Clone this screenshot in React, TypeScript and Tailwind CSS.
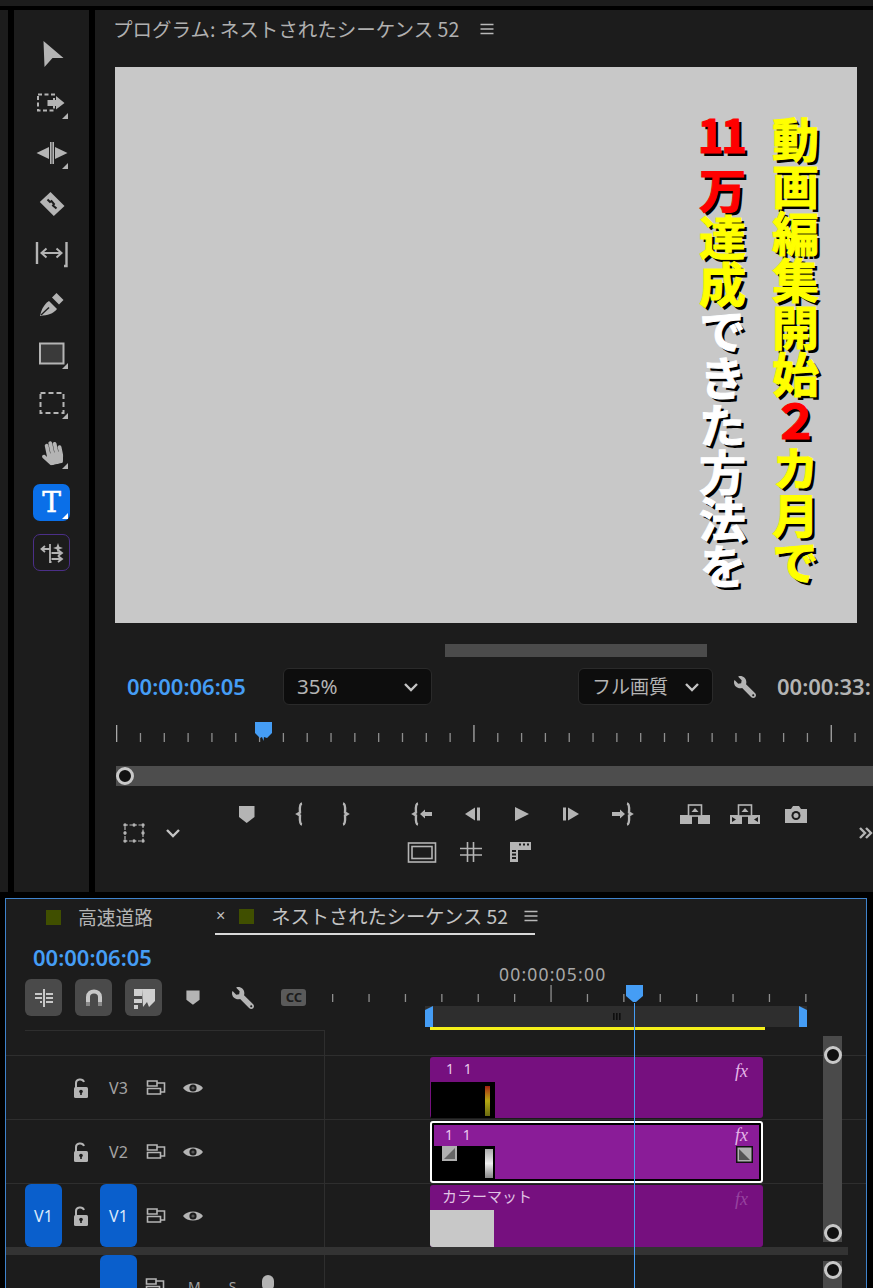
import React from "react";
import { FaHandPaper, FaWrench } from "react-icons/fa";

const g = "#b4b4b4";
const CJK = "font-['Noto_Sans_CJK_JP','Noto_Sans',sans-serif]";
const TIME = "font-['Noto_Sans','Liberation_Sans',sans-serif]";

const Ic: React.FC<{ w?: number; h?: number; children: React.ReactNode; className?: string }> = ({ w = 24, h = 24, children, className }) => (
  <svg width={w} height={h} viewBox={`0 0 ${w} ${h}`} className={`shrink-0 ${className ?? ""}`} fill="none">
    {children}
  </svg>
);

const Corner = () => <path d="M36 30V36H30Z" fill={g} />;

const tools: React.ReactNode[] = [
  <path key="a" d="M11.5 8L31.5 25H20.5L12.5 34Z" fill={g} />,
  <g key="b">
    <rect x="6" y="11.5" width="16" height="16" stroke={g} strokeWidth="2" strokeDasharray="4 2.5" />
    <path d="M15.5 17H24V13L32.5 20L24 26.5V23H15.5Z" fill={g} />
    <Corner />
  </g>,
  <g key="c">
    <path d="M4.5 20L17 14V26Z M35.5 20L23 14V26Z" fill={g} />
    <rect x="18" y="9" width="1.6" height="22" fill={g} />
    <rect x="20.4" y="9" width="1.6" height="22" fill={g} />
    <Corner />
  </g>,
  <g key="d">
    <path d="M7.8 19L18.5 9L32.5 23L21.8 33Z" fill={g} />
    <path d="M15.5 16.5L18 19L19.5 18L22 21L21 22.5L24.5 25.5" stroke="#1c1c1c" strokeWidth="2" />
  </g>,
  <g key="e">
    <path d="M5 9V31M34.5 9V33H32" stroke={g} strokeWidth="2.4" />
    <path d="M10 20H29M14.5 15.5L9.5 20L14.5 24.5M24.5 15.5L29.5 20L24.5 24.5" stroke={g} strokeWidth="2" />
  </g>,
  <g key="f">
    <path d="M8 33C9.5 26 12 21.5 17 18L25 26C21 31 16 32 8 33Z" fill={g} />
    <path d="M20 14.5L24.5 10L31.5 17L27 21.5Z" fill={g} />
    <path d="M9 32L17 24.5" stroke="#1c1c1c" strokeWidth="1.4" />
  </g>,
  <g key="g">
    <rect x="8" y="10.5" width="23.5" height="20" fill="#3a3a3a" stroke={g} strokeWidth="2" />
    <Corner />
  </g>,
  <g key="h">
    <rect x="8.5" y="10" width="23" height="20" stroke={g} strokeWidth="2" strokeDasharray="5 3" />
    <Corner />
  </g>,
];

const ToolRail: React.FC = () => (
  <div className="flex w-[75px] shrink-0 flex-col items-center gap-[10px] bg-[#1c1c1c] pt-[23px]">
    {tools.map((t, i) => (
      <Ic key={i} w={40} h={40}>
        {t}
      </Ic>
    ))}
    <div className="relative flex h-[40px] w-[40px] items-center justify-center">
      <FaHandPaper size={24} color={g} className="-rotate-12" />
      <svg width="40" height="40" className="absolute left-0 top-0" fill="none">
        <Corner />
      </svg>
    </div>
    <div className="relative mt-[1px] flex h-[37px] w-[37px] items-center justify-center rounded-[7px] bg-[#0a6fe8] font-['DejaVu_Serif',serif] text-[28px] font-normal leading-none text-white [-webkit-text-stroke:0.5px_#fff]">
      T
      <span className="absolute bottom-[2px] right-[2px] h-0 w-0 border-b-[6px] border-l-[6px] border-b-white border-l-transparent" />
    </div>
    <div className="mt-[3px] flex h-[37px] w-[37px] items-center justify-center rounded-[7px] border border-[#4b2f88]">
      <Ic w={30} h={30}>
        <path d="M13 6V24H14.5M13 11H5M8 8L4.5 11L8 14M14.5 15H24M21 12L25 15L21 18M14.5 21H24M21 18L25 21L21 24" stroke={g} strokeWidth="1.8" />
        <path d="M21 5L22.3 8.7L26 10L22.3 11.3L21 15L19.7 11.3L16 10L19.7 8.7Z" fill={g} />
      </Ic>
    </div>
  </div>
);

const Chevron: React.FC<{ className?: string }> = ({ className }) => (
  <Ic w={16} h={10} className={className}>
    <path d="M2 2L8 8L14 2" stroke="#c4c4c4" strokeWidth="2.4" />
  </Ic>
);

const Burger: React.FC<{ className?: string }> = ({ className }) => (
  <Ic w={14} h={12} className={className}>
    <path d="M0.5 1.5H13.5M0.5 6H13.5M0.5 10.5H13.5" stroke="#b8b8b8" strokeWidth="1.4" />
  </Ic>
);

const Wrench: React.FC = () => (
  <div className="flex h-[24px] w-[24px] shrink-0 items-center justify-center">
    <FaWrench size={22} color={g} className="-scale-x-100" />
  </div>
);

const Marker: React.FC<{ scale?: number }> = ({ scale = 1 }) => (
  <svg width={24 * scale} height={24 * scale} viewBox="0 0 24 24" className="shrink-0">
    <path d="M4 4H19.5V15L11.7 21L4 15Z" fill={g} />
  </svg>
);

const Brace: React.FC<{ dir: "l" | "r" }> = ({ dir }) => (
  <Ic>
    <path
      d={dir === "l" ? "M14 1.5C11 2 12 9 12 10.5L9.5 12L12 13.5C12 15 11 22 14 22.5" : "M10 1.5C13 2 12 9 12 10.5L14.5 12L12 13.5C12 15 13 22 10 22.5"}
      stroke={g}
      strokeWidth="2.4"
    />
  </Ic>
);

const ProgramRuler = () => {
  const ticks = Array.from({ length: 32 }, (_, i) => i);
  return (
    <svg width="778" height="22" className="mt-[17px] block shrink-0">
      {ticks.map((i) => {
        const x = 21 + i * 23.82;
        const major = i % 15 === 0;
        return <rect key={i} x={x} y={major ? 3 : 11} width="1.3" height={major ? 17 : 9} fill={major ? "#a8a8a8" : "#8e8e8e"} />;
      })}
      <path d="M160 0H177V11L172 16L169 15L168.5 19L167 15L165 16L160 11Z" fill="#459df5" />
    </svg>
  );
};

const TransportRow = () => (
  <div className="flex items-center">
    <div className="ml-[1px]">
      <Marker />
    </div>
    <div className="ml-[29px]"><Brace dir="l" /></div>
    <div className="ml-[21px]"><Brace dir="r" /></div>
    <Ic className="ml-[52px]" w={26}>
      <path d="M9 1.5C6 2 7 9 7 10.5L4.5 12L7 13.5C7 15 6 22 9 22.5" stroke={g} strokeWidth="2.4" />
      <path d="M11 12L16 7.5V10H23V14H16V16.5Z" fill={g} />
    </Ic>
    <Ic className="ml-[26px]">
      <path d="M4 12L14 5.5V18.5Z" fill={g} />
      <rect x="16" y="5.5" width="3" height="13" fill={g} />
    </Ic>
    <Ic className="ml-[24px]">
      <path d="M6 5L20 12L6 19Z" fill={g} />
    </Ic>
    <Ic className="ml-[26px]">
      <rect x="4" y="5.5" width="3" height="13" fill={g} />
      <path d="M20 12L9 5.5V18.5Z" fill={g} />
    </Ic>
    <Ic className="ml-[27px]" w={26}>
      <path d="M2 10H10V7.5L15 12L10 16.5V14H2Z" fill={g} />
      <path d="M17 1.5C20 2 19 9 19 10.5L21.5 12L19 13.5C19 15 20 22 17 22.5" stroke={g} strokeWidth="2.4" />
    </Ic>
    <Ic className="ml-[43px]" w={32}>
      <rect x="1" y="13" width="12" height="9" fill={g} />
      <rect x="19" y="13" width="12" height="9" fill={g} />
      <rect x="9.5" y="3" width="13" height="11" fill="#1c1c1c" stroke={g} strokeWidth="1.6" />
      <path d="M16 6L19.5 10H12.5Z" fill={g} />
    </Ic>
    <Ic className="ml-[18px]" w={32}>
      <rect x="1" y="13" width="12" height="9" fill={g} />
      <rect x="19" y="13" width="12" height="9" fill={g} />
      <path d="M3 15V20L7 17.5Z M29 15V20L25 17.5Z" fill="#1c1c1c" />
      <rect x="9.5" y="3" width="13" height="11" fill="#1c1c1c" stroke={g} strokeWidth="1.6" />
      <path d="M16 6L19.5 10H12.5Z" fill={g} />
    </Ic>
    <Ic className="ml-[23px]">
      <path d="M1 7H7L9 4H15L17 7H23V21H1Z" fill={g} />
      <circle cx="12" cy="13.5" r="4.5" fill="#1c1c1c" />
      <circle cx="12" cy="13.5" r="2.5" fill={g} />
    </Ic>
  </div>
);

const ProgramPanel: React.FC = () => (
  <div className="flex min-w-0 flex-1 flex-col overflow-hidden bg-[#1c1c1c]">
    <div className={`flex h-[57px] shrink-0 items-center pb-[20px] pl-[18px] ${CJK} text-[19.5px] text-[#b0b0b0]`}>
      <span className="whitespace-nowrap">プログラム: ネストされたシーケンス 52</span>
      <Burger className="ml-[21px]" />
    </div>
    <div className="ml-[20px] flex h-[556px] w-[742px] shrink-0 flex-row-reverse gap-[21px] bg-[#c8c8c8] pr-[36px] pt-[49px]">
      <div className={`${CJK} font-bold text-[47px] leading-[52px] text-[#ffff00] [writing-mode:vertical-rl] [text-shadow:3px_3px_0_#000] [-webkit-text-stroke:1px_currentColor]`}>
        動画編集開始<span className="text-[#ff0000]">２</span>カ月で
      </div>
      <div className={`${CJK} -mt-[7px] font-bold text-[47px] leading-[52px] text-white [writing-mode:vertical-rl] [text-shadow:3px_3px_0_#000] [-webkit-text-stroke:1px_currentColor]`}>
        <span className="text-[#ff0000]">
          <span className="[text-combine-upright:all]">11</span>
          <span className="ms-[11px]">万</span>
        </span>
        <span className="text-[#ffff00]">達成</span>できた方法を
      </div>
    </div>
    <div className="ml-[350px] mt-[21px] h-[13px] w-[262px] shrink-0 bg-[#4b4b4b]" />
    <div className="mt-[11px] flex h-[37px] shrink-0 items-center pl-[32px]">
      <span className={`w-[156px] shrink-0 ${TIME} text-[22px] font-semibold text-[#459df5]`}>00:00:06:05</span>
      <div className="flex h-[37px] w-[149px] shrink-0 items-center justify-between rounded-[6px] border border-[#2a2a2a] bg-[#0d0d0d] pl-[13px] pr-[12px]">
        <span className={`${TIME} text-[20.5px] text-[#b4b4b4]`}>35%</span>
        <Chevron />
      </div>
      <div className="ml-[146px] flex h-[37px] w-[135px] shrink-0 items-center justify-between rounded-[6px] border border-[#2a2a2a] bg-[#0d0d0d] pl-[13px] pr-[12px]">
        <span className={`${CJK} whitespace-nowrap text-[19px] text-[#b4b4b4]`}>フル画質</span>
        <Chevron />
      </div>
      <div className="ml-[20px]"><Wrench /></div>
      <span className={`ml-[20px] whitespace-nowrap ${TIME} text-[22px] font-semibold text-[#b4b4b4]`}>00:00:33:</span>
    </div>
    <ProgramRuler />
    <div className="ml-[21px] mt-[22px] flex h-[20px] w-[800px] shrink-0 items-center bg-[#4d4d4d]">
      <div className="h-[18px] w-[18px] rounded-full border-[3px] border-[#c8c8c8] bg-[#111]" />
    </div>
    <div className="mt-[16px] flex shrink-0 items-center">
      <div className="ml-[27px] flex w-[112px] shrink-0 items-center gap-[19px]">
        <Ic>
          <rect x="3" y="4" width="18" height="16" stroke={g} strokeWidth="1.2" strokeDasharray="3 1.5" />
          <path d="M3 4h.01M12 4h.01M21 4h.01M3 12h.01M21 12h.01M3 20h.01M12 20h.01M21 20h.01" stroke={g} strokeWidth="3.4" strokeLinecap="round" />
        </Ic>
        <Chevron />
      </div>
      <div className="flex flex-col">
        <TransportRow />
        <div className="ml-[173px] mt-[14px] flex items-center">
          <Ic w={30}>
            <rect x="1.5" y="3" width="27" height="19" stroke={g} strokeWidth="1.6" />
            <rect x="5" y="6.5" width="20" height="12" stroke={g} strokeWidth="1.6" />
          </Ic>
          <Ic className="ml-[22px]">
            <path d="M1 8.5H23M1 15H23M8.5 2V22M14.5 2V22" stroke={g} strokeWidth="1.6" />
          </Ic>
          <Ic className="ml-[25px]">
            <path d="M2 2H23V10H10V22H2Z" fill={g} />
            <path d="M11 4.5H13M15 4.5H17M19 4.5H21M4 11H8M4 14.5H8M4 18H8" stroke="#1c1c1c" strokeWidth="2" />
          </Ic>
        </div>
      </div>
      <Ic w={14} h={16} className="ml-[51px]">
        <path d="M1 3L6 8L1 13M7 3L12 8L7 13" stroke={g} strokeWidth="2.4" />
      </Ic>
    </div>
  </div>
);

const TimelineButton: React.FC<{ children: React.ReactNode; className?: string }> = ({ children, className }) => (
  <div className={`flex h-[37px] w-[37px] shrink-0 items-center justify-center rounded-[6px] bg-[#4a4a4a] ${className ?? ""}`}>{children}</div>
);

const Lock = () => (
  <Ic w={18} h={22}>
    <path d="M4 11V6C4 2 10.5 1 12 5" stroke={g} strokeWidth="2" />
    <rect x="2" y="10" width="14" height="11" rx="1.5" fill={g} />
    <circle cx="9" cy="14.5" r="1.8" fill="#1c1c1c" />
    <rect x="8.2" y="15" width="1.6" height="3" fill="#1c1c1c" />
  </Ic>
);

const TrackIcon = () => (
  <Ic w={20} h={18}>
    <path d="M1.5 2H11V7H1.5ZM1.5 9.5H14.5V15H1.5ZM11 4H18.5V13H14.5" stroke={g} strokeWidth="1.6" />
  </Ic>
);

const Eye = () => (
  <Ic w={22} h={14}>
    <path d="M1 7C5 1 17 1 21 7C17 13 5 13 1 7Z" fill={g} />
    <circle cx="11" cy="7" r="3.6" fill="#1c1c1c" />
    <circle cx="11" cy="7" r="1.6" fill="#555" />
  </Ic>
);

const BlueSlot: React.FC<{ label?: string }> = ({ label }) => (
  <div className={`flex h-full w-[37px] shrink-0 items-center justify-center rounded-[6px] bg-[#0a5fcc] ${TIME} text-[16px] text-[#dbe9fb]`}>{label}</div>
);

const TrackHeader: React.FC<{ name: string; target?: boolean }> = ({ name, target }) => (
  <div className="flex h-full w-[319px] shrink-0 items-center border-r border-[#2e2e2e] pl-[19px]">
    <div className="flex h-full w-[37px] shrink-0 items-center">{target ? <BlueSlot label="V1" /> : null}</div>
    <div className="flex w-[38px] shrink-0 justify-center"><Lock /></div>
    {target ? (
      <BlueSlot label={name} />
    ) : (
      <div className={`w-[37px] shrink-0 text-center ${TIME} text-[16px] text-[#a4a4a4]`}>{name}</div>
    )}
    <div className="flex w-[37px] shrink-0 justify-center"><TrackIcon /></div>
    <div className="flex w-[38px] shrink-0 justify-center"><Eye /></div>
  </div>
);

const Fx: React.FC<{ className: string }> = ({ className }) => (
  <span className={`absolute font-['Liberation_Serif',serif] text-[18px] italic ${className}`}>fx</span>
);

const ClipA = () => (
  <div className="relative ml-[105px] mt-[1px] h-[61px] w-[333px] rounded-[3px] bg-[#76107f]">
    <span className={`absolute left-[16px] top-[1px] ${TIME} text-[14px] tracking-[3px] text-[#e9c9ec]`}>1 1</span>
    <Fx className="right-[15px] top-[1px] text-[#e4b6e8]" />
    <div className="absolute bottom-0 left-[1px] h-[36px] w-[64px] bg-black">
      <div className="absolute bottom-[2px] right-[5px] top-[4px] w-[5px] bg-gradient-to-b from-[#a01a10] via-[#b3a812] to-[#6a6a10]" />
    </div>
  </div>
);

const ClipB = () => (
  <div className="relative ml-[105px] mt-[1px] h-[62px] w-[333px] rounded-[3px] border-[2px] border-white bg-black p-[2px]">
    <div className="relative h-full bg-[#8a1c98]">
      <span className={`absolute left-[11px] -top-[1px] ${TIME} text-[14px] tracking-[3px] text-[#ecc8f0]`}>1 1</span>
      <Fx className="right-[11px] -top-[3px] text-[#e4b6e8]" />
      <div className="absolute bottom-0 left-0 h-[33px] w-[61px] bg-black">
        <div className="absolute bottom-[1px] right-[2px] top-[3px] w-[8px] bg-gradient-to-b from-[#aaa] via-[#eee] to-[#888]" />
      </div>
      <svg width="15" height="15" className="absolute bottom-[18px] left-[8px]">
        <rect width="15" height="15" fill="#b0b0b0" />
        <path d="M13 2V13H2Z" fill="#666" />
      </svg>
      <svg width="17" height="17" className="absolute bottom-[16px] right-[6px]">
        <rect width="17" height="17" fill="#111" />
        <rect x="1.5" y="1.5" width="14" height="14" fill="#b0b0b0" />
        <path d="M3 3V14H14Z" fill="#555" />
      </svg>
    </div>
  </div>
);

const ClipC = () => (
  <div className="relative ml-[105px] mt-[1px] h-[62px] w-[333px] overflow-hidden rounded-[3px] bg-[#76107f]">
    <span className={`absolute left-[12px] top-0 whitespace-nowrap ${CJK} text-[15px] text-[#e0c4e4]`}>カラーマット</span>
    <Fx className="right-[15px] top-[1px] text-[#96449f]" />
    <div className="absolute bottom-0 left-0 h-[37px] w-[64px] bg-[#c8c8c8]" />
  </div>
);

const Knob = () => <div className="h-[18px] w-[18px] rounded-full border-[3px] border-[#c8c8c8] bg-[#111]" />;

const TimelineRuler = () => {
  const ticks = Array.from({ length: 14 }, (_, i) => i);
  return (
    <svg width="541" height="21" className="block shrink-0">
      {ticks.map((i) => {
        const x = 7 + i * 36.4;
        const major = (i - 6) % 10 === 0;
        return <rect key={i} x={x} y={major ? 1 : 10} width="1.3" height={major ? 17 : 8} fill="#8e8e8e" />;
      })}
      <path d="M301 1H318V12L311 18H308L301 12Z" fill="#459df5" />
    </svg>
  );
};

const TimelinePanel: React.FC = () => (
  <div className="relative mx-[5px] mt-[6px] flex h-[390px] w-[862px] shrink-0 flex-col overflow-hidden border-x border-t border-[#3f83cc] bg-[#1c1c1c]">
    <div className="flex h-[36px] shrink-0 items-center">
      <span className="ml-[40px] h-[15px] w-[15px] shrink-0 bg-[#404f00]" />
      <span className={`ml-[17px] ${CJK} text-[18.75px] text-[#b4b4b4]`}>高速道路</span>
      <div className="ml-[62px] flex h-full w-[320px] items-center border-b-2 border-[#d8d8d8]">
        <span className="ml-[1px] font-['Liberation_Sans',sans-serif] text-[16px] leading-none text-[#c0c0c0]">×</span>
        <span className="ml-[14px] h-[15px] w-[15px] shrink-0 bg-[#404f00]" />
        <span className={`ml-[17px] whitespace-nowrap ${CJK} text-[19.25px] text-[#c4c4c4]`}>ネストされたシーケンス 52</span>
        <Burger className="ml-[16px]" />
      </div>
    </div>
    <div className="flex h-[95px] shrink-0">
      <div className="flex w-[319px] shrink-0 flex-col pl-[19px]">
        <span className={`ml-[8px] mt-[7px] h-[37px] ${TIME} text-[22px] font-semibold leading-[30px] text-[#459df5]`}>00:00:06:05</span>
        <div className="flex items-center">
          <TimelineButton>
            <Ic>
              <path d="M12 3V21" stroke="#c8c8c8" strokeWidth="2" />
              <path d="M3 8H10M3 12H10M14 8H21M14 12H21M8 16H10M14 16H21" stroke="#c8c8c8" strokeWidth="2" />
            </Ic>
          </TimelineButton>
          <TimelineButton className="ml-[13px]">
            <Ic>
              <path d="M6 18V11C6 3.5 18 3.5 18 11V18" stroke="#c8c8c8" strokeWidth="4" />
              <path d="M4 16H8V20H4ZM16 16H20V20H16Z" fill="#888" />
            </Ic>
          </TimelineButton>
          <TimelineButton className="ml-[13px]">
            <Ic>
              <path d="M2 3H10V10H2ZM2 13H10V17H2ZM2 19H6V23H2Z" fill="#d0d0d0" />
              <path d="M10 3H23V15L17 21L15 16L11 21Z" fill="#d0d0d0" />
            </Ic>
          </TimelineButton>
          <div className="ml-[21px]"><Marker scale={0.85} /></div>
          <div className="ml-[28px]"><Wrench /></div>
          <div className="ml-[26px] flex h-[17px] w-[25px] shrink-0 items-center justify-center rounded-[3px] bg-[#5a5a5a]">
            <span className={`${TIME} text-[13px] font-bold leading-none text-[#1c1c1c]`}>CC</span>
          </div>
        </div>
      </div>
      <div className="flex min-w-0 flex-1 flex-col pt-[29px]">
        <span className={`ml-[174px] h-[20px] ${TIME} whitespace-nowrap text-[17.5px] leading-[20px] tracking-[1.2px] text-[#a8a8a8]`}>00:00:05:00</span>
        <TimelineRuler />
        <div className="ml-[100px] mt-[1px] flex h-[21px] w-[382px] items-center justify-between bg-[#2e2e2e]">
          <svg width="8" height="21"><path d="M0 4L8 0V21H0Z" fill="#459df5" /></svg>
          <svg width="9" height="7"><path d="M1 0H2.6V7H1ZM4 0H5.6V7H4ZM7 0H8.6V7H7Z" fill="#0e0e0e" /></svg>
          <svg width="8" height="21"><path d="M0 0L8 4V21H0Z" fill="#459df5" /></svg>
        </div>
        <div className="ml-[105px] h-[3px] w-[335px] bg-[#f5f01a]" />
      </div>
    </div>
    <div className="flex h-[26px] shrink-0 border-b border-[#2e2e2e]">
      <div className="ml-[19px] h-full w-[300px] border-r border-t border-[#2e2e2e]" />
    </div>
    <div className="flex h-[64px] shrink-0 border-b border-[#2e2e2e]">
      <TrackHeader name="V3" />
      <ClipA />
    </div>
    <div className="flex h-[64px] shrink-0 border-b border-[#2e2e2e]">
      <TrackHeader name="V2" />
      <ClipB />
    </div>
    <div className="flex h-[63px] shrink-0">
      <TrackHeader name="V1" target />
      <ClipC />
    </div>
    <div className="h-[8px] w-[842px] shrink-0 bg-[#333]" />
    <div className="flex h-[40px] shrink-0">
      <div className="flex h-full w-[319px] shrink-0 items-start border-r border-[#2e2e2e] pl-[94px]">
        <BlueSlot />
        <div className="ml-[8px] mt-[20px] flex items-center gap-[20px]">
          <TrackIcon />
          <span className={`${TIME} ml-[3px] text-[14px] text-[#a4a4a4]`}>M</span>
          <span className={`${TIME} ml-[8px] text-[14px] text-[#a4a4a4]`}>S</span>
          <Ic w={14} h={22} className="ml-[5px]">
            <rect x="1" y="0" width="12" height="16" rx="6" fill={g} />
          </Ic>
        </div>
      </div>
    </div>
    <div className="absolute bottom-0 left-[627.5px] top-[104px] w-[1.5px] bg-[#459df5]" />
    <div className="absolute left-[817px] top-[137px] flex h-[206px] w-[19px] flex-col items-center justify-between bg-[#4a4a4a] pt-[10px]">
      <Knob />
      <Knob />
    </div>
    <div className="absolute left-[817px] top-[362px] flex h-[40px] w-[19px] flex-col items-center bg-[#4a4a4a]">
      <Knob />
    </div>
  </div>
);

export default function App() {
  return (
    <div className="flex h-[1288px] w-[873px] flex-col overflow-hidden bg-black">
      <div className="h-[6px] shrink-0 bg-[#1c1c1c]" />
      <div className="mt-[4px] flex h-[882px] shrink-0 gap-[6px]">
        <div className="w-[8px] shrink-0 bg-[#1c1c1c]" />
        <ToolRail />
        <ProgramPanel />
      </div>
      <TimelinePanel />
    </div>
  );
}
